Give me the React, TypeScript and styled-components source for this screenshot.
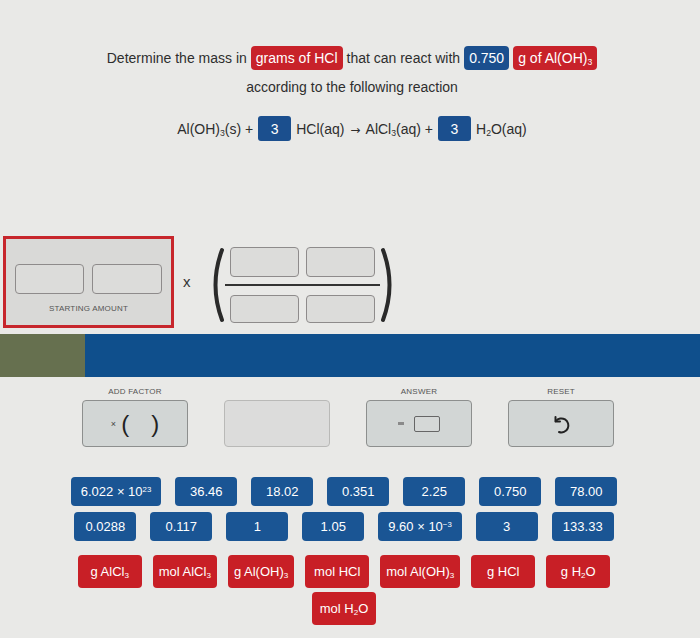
import React from "react";
import styled, { createGlobalStyle } from "styled-components";

const Global = createGlobalStyle`
  html, body { margin: 0; padding: 0; background: #e9e9e7; }
  body { font-family: "Liberation Sans", Arial, Helvetica, sans-serif; }
  * { box-sizing: border-box; }
`;

const Page = styled.div`
  width: 700px;
  height: 638px;
  overflow: hidden;
  background: #e9e9e7;
  display: flex;
  flex-direction: column;
  color: #2e2e2e;
`;

const Question = styled.div`
  padding-top: 46px;
  display: flex;
  flex-direction: column;
  align-items: center;
  font-size: 14px;
`;

const Line = styled.div<{ $mt?: number; $h?: number; $gap?: number }>`
  display: flex;
  align-items: center;
  gap: ${(p) => p.$gap ?? 4}px;
  height: ${(p) => p.$h ?? 24}px;
  margin-top: ${(p) => p.$mt ?? 0}px;
  white-space: nowrap;
  padding-left: 4px;
`;

const Pill = styled.span<{ $tone: "red" | "blue" }>`
  display: inline-flex;
  align-items: center;
  justify-content: center;
  height: 24px;
  padding: 0 5px;
  border-radius: 4px;
  color: #fff;
  font-size: 14px;
  background: ${(p) => (p.$tone === "red" ? "#c8222a" : "#1b4f8e")};
`;

const CoefBox = styled.span`
  display: inline-flex;
  align-items: center;
  justify-content: center;
  width: 33px;
  height: 25px;
  border-radius: 3px;
  background: #1b4f8e;
  color: #fff;
  font-size: 14px;
`;

const Arrow = styled.span`
  font-family: "DejaVu Sans", sans-serif;
  font-size: 12px;
  margin: 0 2px;
`;

const Sub = styled.sub`
  font-size: 0.62em;
  vertical-align: -0.28em;
  line-height: 0;
`;

const Sup = styled.sup`
  font-size: 0.6em;
  vertical-align: 0.55em;
  line-height: 0;
`;

const Workspace = styled.div`
  margin-top: 95px;
  height: 92px;
  display: flex;
  align-items: center;
  padding-left: 3px;
`;

const StartBox = styled.div`
  width: 171px;
  height: 92px;
  border: 3px solid #c7262c;
  background: #d9d9d7;
  display: flex;
  flex-direction: column;
  align-items: center;
  padding-top: 25px;
`;

const InputRow = styled.div<{ $gap?: number }>`
  display: flex;
  gap: ${(p) => p.$gap ?? 8}px;
`;

const InputBox = styled.div<{ $w: number; $h: number }>`
  width: ${(p) => p.$w}px;
  height: ${(p) => p.$h}px;
  border: 1px solid #8e8b8b;
  border-radius: 4px;
  background: #dcdcda;
`;

const SmallLabel = styled.div`
  font-size: 8px;
  letter-spacing: 0.2px;
  color: #555;
  text-transform: uppercase;
  white-space: nowrap;
`;

const StartLabel = styled(SmallLabel)`
  margin-top: 10px;
`;

const Times = styled.div`
  margin-left: 9px;
  font-size: 15px;
  color: #333;
  margin-top: -2px;
`;

const Fraction = styled.div`
  margin-left: 17px;
  display: flex;
  align-items: center;
  gap: 4px;
  margin-top: 5px;
`;

const Stack = styled.div`
  display: flex;
  flex-direction: column;
`;

const FracLine = styled.div`
  height: 2px;
  background: #333;
  margin: 7px -5px 9px;
`;

const Bar = styled.div`
  margin-top: 6px;
  height: 43px;
  display: flex;
`;

const BarGreen = styled.div`
  width: 85px;
  background: #66704f;
`;

const BarBlue = styled.div`
  flex: 1;
  background: #0f4f8c;
`;

const Tools = styled.div`
  display: flex;
  gap: 36px;
  padding: 10px 0 0 82px;
`;

const ToolCol = styled.div`
  width: 106px;
  display: flex;
  flex-direction: column;
  align-items: center;
  gap: 3px;
`;

const LabelSlot = styled(SmallLabel)`
  height: 10px;
  line-height: 10px;
`;

const ToolButton = styled.div<{ $blank?: boolean }>`
  width: 106px;
  height: 47px;
  border-radius: 4px;
  border: 1px solid ${(p) => (p.$blank ? "#b9b9b7" : "#8d8f8e")};
  background: ${(p) => (p.$blank ? "#dcdcdb" : "#d2d6d5")};
  display: flex;
  align-items: center;
  justify-content: center;
  color: #222;
`;

const FactorX = styled.span`
  font-size: 9px;
  margin-right: 5px;
  color: #444;
`;

const FactorParen = styled.span`
  font-size: 24px;
  color: #222;
`;

const FactorGap = styled.span`
  width: 22px;
`;

const Equals = styled.span`
  width: 6px;
  height: 3px;
  background: #8a8a8a;
  margin-right: 10px;
`;

const AnswerBox = styled.span`
  width: 26px;
  height: 16px;
  border: 1px solid #666;
  border-radius: 2px;
  background: #d5d8d7;
`;

const Grid = styled.div<{ $mt: number; $gap: number; $rowGap: number }>`
  margin-top: ${(p) => p.$mt}px;
  margin-left: 64px;
  width: 560px;
  display: flex;
  flex-wrap: wrap;
  justify-content: center;
  column-gap: ${(p) => p.$gap}px;
  row-gap: ${(p) => p.$rowGap}px;
`;

const ValueButton = styled.div<{ $tone: "red" | "blue" }>`
  height: ${(p) => (p.$tone === "red" ? 33 : 29)}px;
  min-width: ${(p) => (p.$tone === "red" ? 64 : 62)}px;
  padding: 0 ${(p) => (p.$tone === "red" ? 6 : 10)}px;
  border-radius: 4px;
  background: ${(p) => (p.$tone === "red" ? "#c81f26" : "#1a5594")};
  color: #fff;
  font-size: 13px;
  display: flex;
  align-items: center;
  justify-content: center;
  white-space: nowrap;
`;

const Paren = ({ right }: { right?: boolean }) => (
  <svg width="18" height="76" viewBox="0 0 18 76">
    <path
      d={right ? "M4 3 Q17 38 4 73" : "M14 3 Q1 38 14 73"}
      fill="none"
      stroke="#2a2a2a"
      strokeWidth="4"
      strokeLinecap="round"
    />
  </svg>
);

const ResetIcon = () => (
  <svg width="24" height="24" viewBox="0 0 24 24" fill="none" stroke="#222" strokeWidth="2" strokeLinecap="round" strokeLinejoin="round">
    <path d="M6.5 5 V9.5 H11" />
    <path d="M6.8 9.2 A7 7 0 1 1 10 20" />
  </svg>
);

const blueValues: React.ReactNode[] = [
  <>6.022 × 10<Sup>23</Sup></>,
  "36.46",
  "18.02",
  "0.351",
  "2.25",
  "0.750",
  "78.00",
  "0.0288",
  "0.117",
  "1",
  "1.05",
  <>9.60 × 10<Sup>−3</Sup></>,
  "3",
  "133.33",
];

const redValues: React.ReactNode[] = [
  <>g AlCl<Sub>3</Sub></>,
  <>mol AlCl<Sub>3</Sub></>,
  <>g Al(OH)<Sub>3</Sub></>,
  "mol HCl",
  <>mol Al(OH)<Sub>3</Sub></>,
  "g HCl",
  <>g H<Sub>2</Sub>O</>,
  <>mol H<Sub>2</Sub>O</>,
];

export default function App() {
  return (
    <Page>
      <Global />
      <Question>
        <Line>
          <span>Determine the mass in</span>
          <Pill $tone="red">grams of HCl</Pill>
          <span>that can react with</span>
          <Pill $tone="blue">0.750</Pill>
          <Pill $tone="red">
            <span>
              g of Al(OH)<Sub>3</Sub>
            </span>
          </Pill>
        </Line>
        <Line $mt={7} $h={20}>
          <span>according to the following reaction</span>
        </Line>
        <Line $mt={19} $h={25} $gap={5}>
          <span>
            Al(OH)<Sub>3</Sub>(s) +
          </span>
          <CoefBox>3</CoefBox>
          <span>
            HCl(aq) <Arrow>→</Arrow> AlCl<Sub>3</Sub>(aq) +
          </span>
          <CoefBox>3</CoefBox>
          <span>
            H<Sub>2</Sub>O(aq)
          </span>
        </Line>
      </Question>

      <Workspace>
        <StartBox>
          <InputRow>
            <InputBox $w={69} $h={30} />
            <InputBox $w={70} $h={30} />
          </InputRow>
          <StartLabel>Starting Amount</StartLabel>
        </StartBox>
        <Times>x</Times>
        <Fraction>
          <Paren />
          <Stack>
            <InputRow $gap={7}>
              <InputBox $w={69} $h={30} />
              <InputBox $w={69} $h={30} />
            </InputRow>
            <FracLine />
            <InputRow $gap={7}>
              <InputBox $w={69} $h={28} />
              <InputBox $w={69} $h={28} />
            </InputRow>
          </Stack>
          <Paren right />
        </Fraction>
      </Workspace>

      <Bar>
        <BarGreen />
        <BarBlue />
      </Bar>

      <Tools>
        <ToolCol>
          <LabelSlot>Add Factor</LabelSlot>
          <ToolButton>
            <FactorX>×</FactorX>
            <FactorParen>(</FactorParen>
            <FactorGap />
            <FactorParen>)</FactorParen>
          </ToolButton>
        </ToolCol>
        <ToolCol>
          <LabelSlot />
          <ToolButton $blank />
        </ToolCol>
        <ToolCol>
          <LabelSlot>Answer</LabelSlot>
          <ToolButton>
            <Equals />
            <AnswerBox />
          </ToolButton>
        </ToolCol>
        <ToolCol>
          <LabelSlot>Reset</LabelSlot>
          <ToolButton>
            <ResetIcon />
          </ToolButton>
        </ToolCol>
      </Tools>

      <Grid $mt={30} $gap={14} $rowGap={6}>
        {blueValues.map((v, i) => (
          <ValueButton key={i} $tone="blue">
            <span>{v}</span>
          </ValueButton>
        ))}
      </Grid>

      <Grid $mt={14} $gap={11} $rowGap={4}>
        {redValues.map((v, i) => (
          <ValueButton key={i} $tone="red">
            <span>{v}</span>
          </ValueButton>
        ))}
      </Grid>
    </Page>
  );
}
